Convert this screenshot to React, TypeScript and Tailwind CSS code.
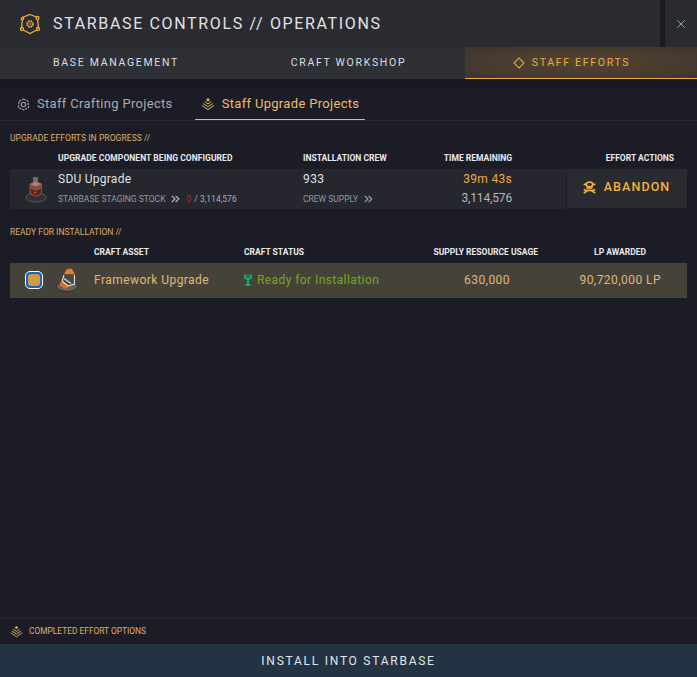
import { X } from "lucide-react"

const font = "font-['Roboto',sans-serif]"

function HexLogo() {
  return (
    <svg width="22" height="22" viewBox="0 0 22 22" fill="none" stroke="#f0ad3c" strokeWidth="1.3">
      <path d="M11 1.5 L18.5 4.5 L19.5 16 L11 20.5 L2.5 16 L3.5 4.5 Z" />
      <circle cx="18.5" cy="5" r="1.5" fill="#2a2b31" />
      <circle cx="3.5" cy="5.5" r="1.2" fill="#2a2b31" />
      <circle cx="3" cy="16" r="1.5" fill="#2a2b31" />
      <circle cx="19" cy="16" r="1.5" fill="#2a2b31" />
      <circle cx="11" cy="11" r="2.8" strokeWidth="2" strokeDasharray="1.5 0.7" />
      <circle cx="11" cy="11" r="0.8" fill="#f0ad3c" stroke="none" />
    </svg>
  )
}

function Gear() {
  return (
    <svg width="13" height="13" viewBox="0 0 13 13" fill="none" stroke="#a4a6ab" strokeWidth="1.1">
      <path d="M6.5 1 L11 3.2 L11.5 9.5 L6.5 12 L1.5 9.5 L2 3.2 Z" strokeDasharray="2.4 0.8" />
      <circle cx="6.5" cy="6.5" r="2.2" />
    </svg>
  )
}

function Pyramid({ size = 14 }: { size?: number }) {
  return (
    <svg width={size} height={size} viewBox="0 0 14 14" fill="none" stroke="#e0b465" strokeWidth="1">
      <path d="M7 1 L9 3 L7 4.4 L5 3 Z" fill="#e0b465" stroke="none" />
      <path d="M3.6 4.6 L7 6.9 L10.4 4.6" />
      <path d="M2.2 6.6 L7 9.6 L11.8 6.6" />
      <path d="M0.8 8.4 L7 12.6 L13.2 8.4" />
    </svg>
  )
}

function Chevrons({ color = "#c3c6cc" }: { color?: string }) {
  return (
    <svg width="9" height="8" viewBox="0 0 9 8" fill="none" stroke={color} strokeWidth="1.1">
      <path d="M0.8 0.8 L4 4 L0.8 7.2" />
      <path d="M4.6 0.8 L7.8 4 L4.6 7.2" />
    </svg>
  )
}

function SkullIcon() {
  return (
    <svg width="13" height="13" viewBox="0 0 13 13" fill="none" stroke="#f4b23e" strokeWidth="1.6">
      <ellipse cx="6.5" cy="3.4" rx="3.2" ry="2.4" />
      <path d="M0.6 3.4 L3 3.4 M10 3.4 L12.4 3.4" />
      <path d="M3.4 7 L9.6 7" />
      <path d="M0.8 12 L5 9.4 L8 9.4 L12.2 12 M0.8 8.6 L3.6 9.6 M12.2 8.6 L9.4 9.6" />
    </svg>
  )
}

function SduIcon() {
  return (
    <svg width="22" height="27" viewBox="0 0 22 27">
      <ellipse cx="11" cy="21.5" rx="10" ry="4.5" fill="#2e3036" stroke="#55585f" />
      <rect x="8" y="1" width="5" height="6" fill="#6a6a6e" />
      <path d="M4.5 8 L11 5.5 L17 8 L17 18 L11 21 L4.5 18 Z" fill="#8a4a3e" />
      <path d="M4.5 8 L11 10.5 L17 8 L11 5.5 Z" fill="#b57d70" />
      <path d="M6 13 L11 15 L16 13 L16 17 L11 19.5 L6 17 Z" fill="#4e211b" />
      <path d="M8 15.5 L12 16 L10 18 Z" fill="#d0502a" />
    </svg>
  )
}

function FrameworkIcon() {
  return (
    <svg width="22" height="24" viewBox="0 0 22 24">
      <ellipse cx="11" cy="18.5" rx="10.5" ry="5" fill="#66635e" stroke="#2f2e2c" />
      <path d="M4 14.5 L9 13 L13 19 L8.5 21 L4 17.5 Z" fill="#dd6a25" />
      <path d="M8 6 L11 1 L16 0.8 L19 6.5 Z" fill="#ec7c2c" />
      <path d="M8 7 L6 13 L12 18 L18.5 16 L18.5 7 Z" fill="#4a4845" />
      <path d="M8 7 L6 13 L12 18 L18.5 16 L18.5 7 M8 10.5 L15 15.5" stroke="#e5e2dc" strokeWidth="1.1" fill="none" />
    </svg>
  )
}

function ReadyIcon() {
  return (
    <svg width="8" height="12" viewBox="0 0 8 12" fill="none" stroke="#16b27a" strokeWidth="1.8">
      <path d="M1 0.5 L1 3.6 L4 5.6 L7 3.6 L7 0.5" fill="#16b27a" fillOpacity="0.35" />
      <path d="M4 5.6 L4 10" />
      <path d="M1.4 10.8 L6.6 10.8" />
    </svg>
  )
}

export default function App() {
  return (
    <div className={`${font} flex h-[677px] w-[697px] flex-col overflow-hidden bg-[#1c1c26]`}>
      <header className="flex h-[47px] bg-[#2a2b31]">
        <div className="flex flex-1 items-center gap-[12px] pl-[19px]">
          <HexLogo />
          <h1 className="text-[16px] font-normal tracking-[1.65px] text-[#e0e2e5]">STARBASE CONTROLS // OPERATIONS</h1>
        </div>
        <div className="w-[5px] bg-[#1b1b23]" />
        <div className="flex w-[32px] items-center justify-center text-[#9aa6b6]">
          <X size={14} strokeWidth={1.6} />
        </div>
      </header>

      <nav className="grid h-[32px] grid-cols-[232px_233px_232px] bg-[#2f3036] text-[10.5px] tracking-[1.69px]">
        <div className="flex items-center justify-center text-[#dcdee2]">BASE MANAGEMENT</div>
        <div className="flex items-center justify-center text-[#dcdee2]">CRAFT WORKSHOP</div>
        <div className="flex items-center justify-center gap-[9px] border-b border-[#f3ac2c] bg-[radial-gradient(ellipse_at_center,#55452f_0%,#3f3530_100%)] pr-[17px] text-[#e8ad48]">
          <span className="h-[8px] w-[8px] rotate-45 border border-[#f0ad3c]" />
          STAFF EFFORTS
        </div>
      </nav>

      <div className="h-[9px] bg-[#17171f]" />

      <div className="flex h-[33px] items-stretch gap-[22px] border-b border-[#2a2a32] pl-[17px] text-[13px] tracking-[0.32px]">
        <div className="flex items-center gap-[7px] text-[#a9abb0]">
          <Gear />
          Staff Crafting Projects
        </div>
        <div className="flex items-center gap-[7px] border-b border-[#e7bb6c] px-[6px] text-[#e8bd70]">
          <Pyramid />
          Staff Upgrade Projects
        </div>
      </div>

      <main className="flex flex-1 flex-col px-[10px]">
        <p className="mt-[12px] text-[8.5px] leading-[10px] tracking-[0.07px] text-[#dcb06a]">UPGRADE EFFORTS IN PROGRESS //</p>

        <div className="mt-[10px] grid h-[10px] grid-cols-[48px_245px_120px_89px_174px] items-center text-[8.5px] leading-[10px] font-bold text-[#e8e9eb]">
          <span>&nbsp;</span>
          <span className="tracking-[0.05px]">UPGRADE COMPONENT BEING CONFIGURED</span>
          <span>INSTALLATION CREW</span>
          <span className="text-right">TIME REMAINING</span>
          <span className="pr-[12px] text-right">EFFORT ACTIONS</span>
        </div>

        <div className="mt-[6px] flex h-[40px] gap-px">
          <div className="grid w-[556px] grid-cols-[48px_245px_120px_89px] bg-[#25262e]">
            <div className="flex items-center justify-center pl-[3px]">
              <SduIcon />
            </div>
            <div className="flex flex-col gap-[6px] pt-[2px]">
              <span className="text-[12px] leading-[16px] tracking-[0.25px] text-[#dfe1e4]">SDU Upgrade</span>
              <div className="flex items-center gap-[6px] text-[8.5px] leading-[12px] text-[#8f9aab]">
                STARBASE STAGING STOCK
                <Chevrons />
                <span className="text-[#b3262c]">0</span>
                <span className="-ml-[3px] text-[#a9adb4]">/ 3,114,576</span>
              </div>
            </div>
            <div className="flex flex-col gap-[6px] pt-[2px]">
              <span className="text-[12px] leading-[16px] tracking-[0.4px] text-[#dfe1e4]">933</span>
              <div className="flex items-center gap-[6px] text-[8.5px] leading-[12px] text-[#8f9aab]">
                CREW SUPPLY
                <Chevrons color="#9aa6b6" />
              </div>
            </div>
            <div className="flex flex-col items-end gap-[3px] pt-[2px] text-[12px] leading-[16px] tracking-[0.3px]">
              <span className="text-[#eeac3f]">39m 43s</span>
              <span className="tracking-[-0.15px] text-[#b4b6ba]">3,114,576</span>
            </div>
          </div>
          <button className="flex h-[39px] flex-1 items-center justify-center gap-[8px] bg-[#2a2b31] pr-[1px] pb-[3px] text-[12.5px] font-medium tracking-[1.1px] text-[#f4b23e]">
            <SkullIcon />
            ABANDON
          </button>
        </div>

        <p className="mt-[18px] text-[8.5px] leading-[10px] text-[#dcb06a]">READY FOR INSTALLATION //</p>

        <div className="mt-[10px] grid h-[10px] grid-cols-[84px_150px_160px_134px_148px] items-center text-[8.5px] leading-[10px] font-bold text-[#e8e9eb]">
          <span>&nbsp;</span>
          <span>CRAFT ASSET</span>
          <span>CRAFT STATUS</span>
          <span className="text-right">SUPPLY RESOURCE USAGE</span>
          <span className="pr-[40px] text-right">LP AWARDED</span>
        </div>

        <div className="mt-[6px] grid h-[35px] grid-cols-[84px_150px_160px_134px_148px] items-center bg-[#45423a] pb-[1px] text-[12px] tracking-[0.45px] text-[#e0b877]">
          <div className="flex items-center pl-[15px]">
            <span className="flex h-[18px] w-[18px] items-center justify-center rounded-[5px] border border-white bg-[#1364c8]">
              <span className="h-[12px] w-[12px] rounded-[3px] bg-[#d29c40]" />
            </span>
            <span className="ml-[13px]">
              <FrameworkIcon />
            </span>
          </div>
          <span>Framework Upgrade</span>
          <div className="flex items-center gap-[5px] tracking-[0.42px] text-[#76a81e]">
            <ReadyIcon />
            Ready for Installation
          </div>
          <span className="pr-[28px] text-right">630,000</span>
          <span className="pr-[25px] text-right">90,720,000 LP</span>
        </div>
      </main>

      <div className="flex h-[26px] items-center gap-[6px] border-t border-[#2a2a32] pl-[10px] text-[8.4px] text-[#dcb06a]">
        <Pyramid size={13} />
        COMPLETED EFFORT OPTIONS
      </div>
      <button className="h-[33px] bg-[#223443] text-[12px] tracking-[1.75px] text-[#e2e6ea]">INSTALL INTO STARBASE</button>
    </div>
  )
}
